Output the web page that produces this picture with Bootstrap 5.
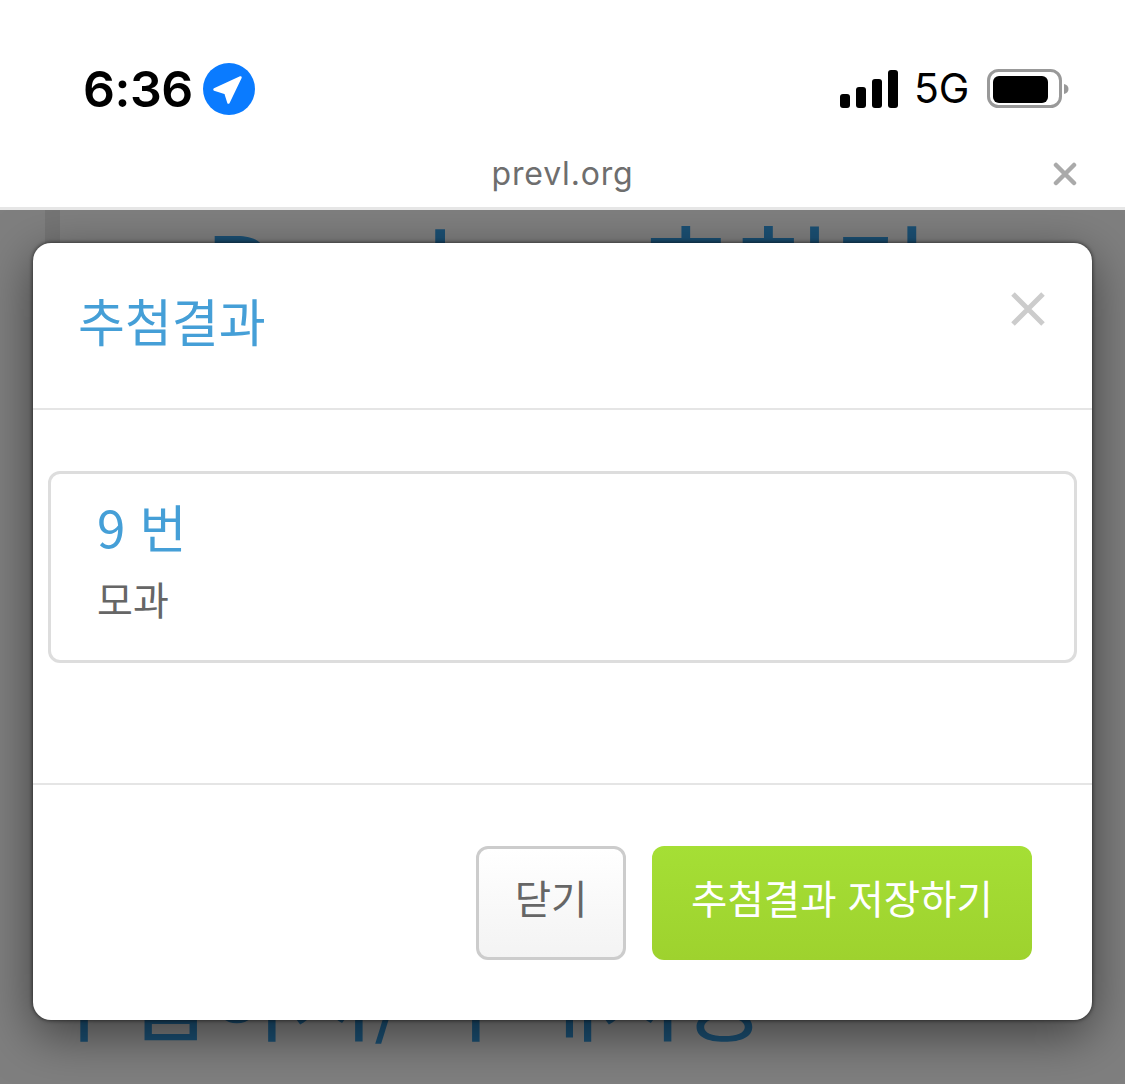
<!doctype html>
<html lang="ko">
<head>
<meta charset="utf-8">
<title>추첨결과</title>
<link href="https://cdn.jsdelivr.net/npm/bootstrap@5.3.0/dist/css/bootstrap.min.css" rel="stylesheet">
<style>
html,body{height:1084px;overflow:hidden;background:#fff;font-family:"Noto Sans CJK KR","Noto Sans",sans-serif}
.phone-shell{width:1125px;height:1084px;overflow:hidden}
.status-line{height:146px;padding:63px 55px 0 83px}
.clock{font:600 50px/1 Inter,"Liberation Sans",sans-serif;color:#000;letter-spacing:-.5px}
.clock-group{gap:10px}
.status-right{margin-top:5px}
.net-label{font:400 41px/1 Inter,"Liberation Sans",sans-serif;color:#000;letter-spacing:-.3px;margin-right:2px}
.url-line{height:64px;border-bottom:3px solid #e6e6e6;position:relative;padding-bottom:6px}
.url-text{font:400 32px/1 Inter,"Liberation Sans",sans-serif;color:#6e6e6e;letter-spacing:.8px}
.url-close{position:absolute;right:48px;top:16px}
.stage{position:relative;height:874px;overflow:hidden;background:#7f7f7f}
.stage-band{position:absolute;left:45px;top:0;width:15px;height:40px;background:#757575}
.stage-title{font-size:106px;line-height:1;color:#1b5074;padding-left:204px;padding-top:5px;white-space:nowrap;word-spacing:152px}
.stage-sub{position:absolute;left:43px;top:740px;font-size:90px;line-height:1;color:#1b5074;white-space:nowrap}
.result-modal.modal-content{position:absolute;left:33px;top:33px;width:1059px;height:777px;border:0;border-radius:18px;background:#fff;box-shadow:0 0 4px rgba(0,0,0,.7),0 14px 50px rgba(0,0,0,.5)}
.result-modal .modal-header{height:167px;padding:0 47px 0 45px;border-bottom:2px solid #e5e5e5;align-items:flex-start}
.result-title{font-size:51px;font-weight:400;line-height:1;color:#459fd7;margin:52px 0 0}
.x-button{border:0;background:none;padding:0;margin-top:49px;line-height:0}
.result-modal .modal-body{height:373px;flex:none;padding:61px 15px 0 15px}
.result-card{height:192px;border:3px solid #ddd;border-radius:12px;padding:25px 46px}
.result-no{font-size:51px;line-height:54px;color:#459fd7;margin:0 0 22px;font-weight:400}
.result-text{font-size:39px;line-height:1.2;color:#666;margin:0}
.result-modal .modal-footer{height:237px;flex:none;border-top:2px solid #e5e5e5;padding:61px 60px 0 0;align-items:flex-start;justify-content:flex-end;gap:26px;flex-wrap:nowrap}
.result-modal .modal-footer>.btn{margin:0;height:114px;border-radius:12px;font-size:39.500px;line-height:1;padding:0 0 12px}
.btn-shut.btn{width:150px;color:#666;border:3px solid #ccc;background:linear-gradient(#fff,#f3f3f3)}
.btn-save.btn{width:380px;color:#fff;border:0;background:linear-gradient(#a5df35,#9ed22e)}
</style>
</head>
<body>
<div class="phone-shell">
  <div class="status-line d-flex justify-content-between align-items-start">
    <div class="clock-group d-flex align-items-center">
      <span class="clock">6:36</span>
      <svg width="52" height="52" viewBox="0 0 52 52" aria-hidden="true"><circle cx="26" cy="26" r="26" fill="#0a7bff"/><path d="M37.500 14.500 11.500 26.500 22.500 30 25.500 39.500Z" fill="#fff" stroke="#fff" stroke-width="2.500" stroke-linejoin="round"/></svg>
    </div>
    <div class="status-right d-flex align-items-center">
      <svg width="58" height="38" viewBox="0 0 58 38" aria-hidden="true"><rect x="0" y="24" width="10" height="14" rx="3"/><rect x="16" y="17" width="10" height="21" rx="3"/><rect x="32" y="9" width="10" height="29" rx="3"/><rect x="48" y="0" width="10" height="38" rx="3"/></svg>
      <span class="net-label ms-3">5G</span>
      <svg class="ms-3" width="83" height="40" viewBox="0 0 83 40" aria-hidden="true"><rect x="1.500" y="1.500" width="72" height="36" rx="10" fill="none" stroke="#999" stroke-width="3"/><rect x="6" y="7" width="55" height="27" rx="6"/><path d="M77 15c3 .5 4.500 2.500 4.500 5s-1.500 4.500-4.500 5Z" fill="#999"/></svg>
    </div>
  </div>
  <div class="url-line d-flex justify-content-center align-items-center">
    <span class="url-text">prevl.org</span>
    <svg class="url-close" width="24" height="24" viewBox="0 0 24 24" aria-hidden="true"><path d="M3 3 21 21M21 3 3 21" stroke="#aaa" stroke-width="4.500" stroke-linecap="round"/></svg>
  </div>
  <div class="stage">
    <div class="stage-band"></div>
    <div class="stage-title">Prevl 추첨기</div>
    <div class="stage-sub">구입하시/ 구매시용</div>
    <div class="modal-content result-modal">
      <div class="modal-header">
        <h5 class="result-title">추첨결과</h5>
        <button class="x-button" type="button" aria-label="닫기"><svg width="34" height="34" viewBox="0 0 34 34"><path d="M2 2 32 32M32 2 2 32" stroke="#ccc" stroke-width="5"/></svg></button>
      </div>
      <div class="modal-body">
        <div class="result-card">
          <h4 class="result-no">9 번</h4>
          <p class="result-text">모과</p>
        </div>
      </div>
      <div class="modal-footer">
        <button class="btn btn-shut" type="button">닫기</button>
        <button class="btn btn-save" type="button">추첨결과 저장하기</button>
      </div>
    </div>
  </div>
</div>
<script src="https://cdn.jsdelivr.net/npm/bootstrap@5.3.0/dist/js/bootstrap.bundle.min.js"></script>
</body>
</html>
